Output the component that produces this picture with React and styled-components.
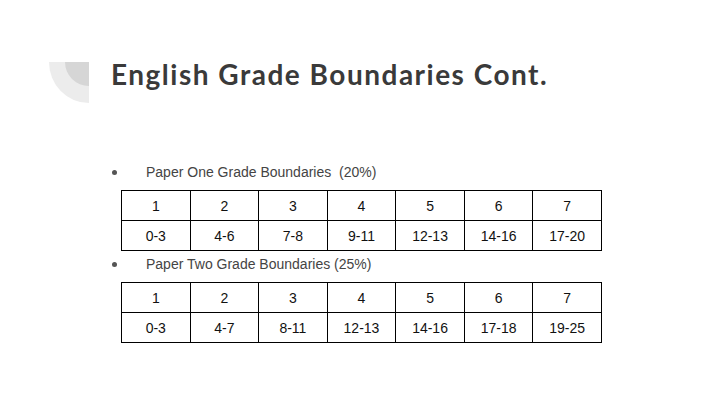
import React from "react";
import styled, { createGlobalStyle } from "styled-components";

const GlobalStyle = createGlobalStyle`
  html, body {
    margin: 0;
    padding: 0;
    background: #ffffff;
  }
`;

const papers = [
  {
    label: "Paper One Grade Boundaries  (20%)",
    marks: ["0-3", "4-6", "7-8", "9-11", "12-13", "14-16", "17-20"],
  },
  {
    label: "Paper Two Grade Boundaries (25%)",
    marks: ["0-3", "4-7", "8-11", "12-13", "14-16", "17-18", "19-25"],
  },
];

const grades = ["1", "2", "3", "4", "5", "6", "7"];

const App = () => {
  return (
    <Slide>
      <GlobalStyle />
      <Header>
        <Corner>
          <svg width="40" height="41" viewBox="0 0 40 41">
            <path d="M0 0 L40 0 L40 41 A40 41 0 0 1 0 0 Z" fill="#ececec" />
            <path d="M16 0 L40 0 L40 24 A24 24 0 0 1 16 0 Z" fill="#d6d6d6" />
          </svg>
        </Corner>
        <Title>English Grade Boundaries Cont.</Title>
      </Header>
      <Body>
        {papers.map((paper) => (
          <Section key={paper.label}>
            <Bullet>
              <Dot />
              <BulletText>{paper.label}</BulletText>
            </Bullet>
            <Table>
              <tbody>
                <tr>
                  {grades.map((g) => (
                    <Cell key={g}>{g}</Cell>
                  ))}
                </tr>
                <tr>
                  {paper.marks.map((m) => (
                    <Cell key={m}>{m}</Cell>
                  ))}
                </tr>
              </tbody>
            </Table>
          </Section>
        ))}
      </Body>
    </Slide>
  );
};

const Slide = styled.div`
  width: 720px;
  height: 405px;
  background: #ffffff;
  overflow: hidden;
`;

const Header = styled.div`
  display: flex;
  align-items: flex-start;
  gap: 22px;
  padding: 62px 0 0 49px;
`;

const Corner = styled.div`
  width: 40px;
  height: 41px;
  svg {
    display: block;
  }
`;

const Title = styled.h1`
  margin: -5px 0 0;
  font-family: Lato, "Noto Sans", sans-serif;
  font-weight: 700;
  font-size: 28px;
  letter-spacing: 1.5px;
  color: #3a3a3a;
`;

const Body = styled.div`
  display: flex;
  flex-direction: column;
  gap: 4px;
  padding: 60px 0 0 112px;
`;

const Section = styled.div`
  display: flex;
  flex-direction: column;
  gap: 9px;
`;

const Bullet = styled.div`
  display: flex;
  align-items: center;
  height: 18px;
`;

const Dot = styled.span`
  width: 5px;
  height: 5px;
  border-radius: 50%;
  background: #555555;
  margin-right: 29px;
`;

const BulletText = styled.span`
  font-family: "Liberation Sans", Arial, sans-serif;
  font-size: 14px;
  color: #444444;
  white-space: pre;
`;

const Table = styled.table`
  margin-left: 9px;
  width: 481px;
  border-collapse: collapse;
  table-layout: fixed;
`;

const Cell = styled.td`
  height: 29px;
  padding: 0;
  border: 1px solid #000000;
  text-align: center;
  font-family: "Liberation Sans", Arial, sans-serif;
  font-size: 14px;
  color: #111111;
`;

export default App;
